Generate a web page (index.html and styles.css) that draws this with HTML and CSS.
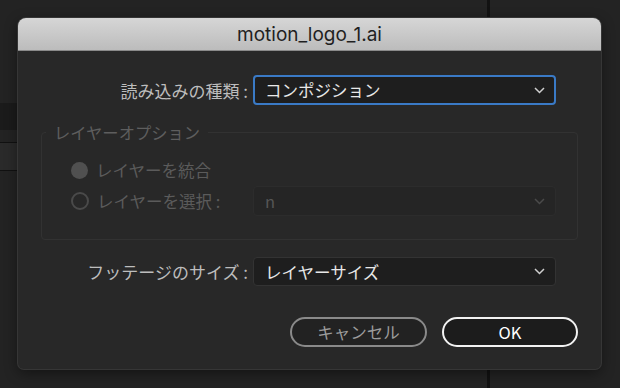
FILE: index.html
```html
<!DOCTYPE html>
<html lang="ja">
<head>
    <meta charset="UTF-8">
    <meta name="viewport" content="width=device-width, initial-scale=1.0">
    <title>motion_logo_1.ai</title>
    <link rel="stylesheet" href="styles.css">
</head>
<body>

<div class="dialog">
    <div class="titlebar">motion_logo_1.ai</div>

    <div class="content">
        <!-- import type -->
        <div class="row">
            <label class="row-label">読み込みの種類 :</label>
            <div class="select focused">
                <span>コンポジション</span>
                <svg class="chevron" width="11" height="7" viewBox="0 0 11 7"><polyline points="1,1 5.5,5.5 10,1" /></svg>
            </div>
        </div>

        <!-- layer options (disabled) -->
        <fieldset class="options">
            <legend>レイヤーオプション</legend>
            <div class="radio-row">
                <span class="radio checked"></span>
                <span>レイヤーを統合</span>
            </div>
            <div class="radio-row second">
                <div class="radio-label">
                    <span class="radio"></span>
                    <span>レイヤーを選択 :</span>
                </div>
                <div class="select disabled">
                    <span>n</span>
                    <svg class="chevron" width="11" height="7" viewBox="0 0 11 7"><polyline points="1,1 5.5,5.5 10,1" /></svg>
                </div>
            </div>
        </fieldset>

        <!-- footage size -->
        <div class="row footage">
            <label class="row-label">フッテージのサイズ :</label>
            <div class="select">
                <span>レイヤーサイズ</span>
                <svg class="chevron" width="11" height="7" viewBox="0 0 11 7"><polyline points="1,1 5.5,5.5 10,1" /></svg>
            </div>
        </div>

        <div class="buttons">
            <button class="btn cancel">キャンセル</button>
            <button class="btn ok">OK</button>
        </div>
    </div>
</div>

</body>
</html>
```

FILE: styles.css
```css
body {
    margin: 0;
    width: 620px;
    height: 388px;
    overflow: hidden;
    font-family: "Noto Sans CJK JP", "Noto Sans", sans-serif;
    background-color: #232323;
    /* panels of the app behind the dialog */
    background-image:
        linear-gradient(#121212, #121212),
        linear-gradient(#1b1b1b, #1b1b1b),
        linear-gradient(#111, #111),
        linear-gradient(#2a2a2a, #2a2a2a),
        linear-gradient(#111, #111);
    background-repeat: no-repeat;
    background-position: 487px 0, 0 103px, 0 142px, 0 143px, 0 170px;
    background-size: 3px 388px, 18px 27px, 18px 1px, 18px 27px, 18px 1px;
}

.dialog {
    margin: 18px 0 0 18px;
    width: 583px;
    background-color: #282828;
    border-radius: 8px 8px 6px 6px;
    box-shadow: 0 0 0 1px #363636, 0 4px 14px rgba(0, 0, 0, 0.45);
}

.titlebar {
    height: 33px;
    line-height: 34px;
    text-align: center;
    font-family: "Inter", "Liberation Sans", sans-serif;
    font-size: 19px;
    color: #1f1f1f;
    background: linear-gradient(#d6d6d6, #bcbcbc);
    border-radius: 8px 8px 0 0;
    border-bottom: 1px solid #8a8a8a;
    box-sizing: border-box;
}

.content {
    padding: 24px 23px 22px 23px;
}

.row {
    display: flex;
    align-items: center;
}

.row-label {
    width: 207px;
    margin-right: 5px;
    text-align: right;
    font-size: 17px;
    color: #bdbdbd;
}

.select {
    display: flex;
    align-items: center;
    justify-content: space-between;
    box-sizing: border-box;
    width: 303px;
    height: 30px;
    padding: 0 10px 0 11px;
    font-size: 16.5px;
    color: #e8e8e8;
    background-color: #1e1e1e;
    border: 1px solid #333;
    border-radius: 4px;
}

.select.focused {
    border: 2px solid #3a7ac6;
    padding-left: 10px;
    padding-right: 9px;
}

.chevron polyline {
    fill: none;
    stroke: #cfcfcf;
    stroke-width: 1.5;
}

.options {
    margin: 16px 0 0 0;
    padding: 17px 21px 23px 0;
    border: 1px solid #323232;
    border-radius: 4px;
    color: #5b5b5b;
    font-size: 16.5px;
}

.options legend {
    margin-left: 4px;
    padding: 0 8px;
    line-height: 22px;
    font-size: 16.3px;
    color: #5e5e5e;
}

.radio-row {
    display: flex;
    align-items: center;
    gap: 8px;
    height: 20px;
    margin-left: 29px;
}

.radio-row.second {
    height: 30px;
    margin-top: 6px;
    gap: 0;
}

.radio-label {
    display: flex;
    align-items: center;
    gap: 8px;
    width: 182px;
}

.radio {
    box-sizing: border-box;
    width: 18px;
    height: 18px;
    border-radius: 50%;
    border: 2px solid #4a4a4a;
}

.radio.checked {
    width: 17px;
    height: 17px;
    border: none;
    background-color: #505050;
}

.select.disabled {
    background-color: #252525;
    border-color: #2c2c2c;
    color: #555;
}

.select.disabled .chevron polyline {
    stroke: #4a4a4a;
}

.footage {
    margin-top: 17px;
}

.footage .select {
    height: 29px;
}

.buttons {
    display: flex;
    justify-content: flex-end;
    gap: 15px;
    margin-top: 31px;
}

.btn {
    height: 30px;
    border-radius: 15px;
    font-family: "Noto Sans CJK JP", "Noto Sans", sans-serif;
    font-size: 16.5px;
    background-color: #222;
    padding: 0;
}

.btn.cancel {
    width: 137px;
    border: 2px solid #8a8a8a;
    color: #9c9c9c;
}

.btn.ok {
    width: 136px;
    border: 2px solid #f2f2f2;
    color: #fff;
    background-color: #1c1c1c;
}
```
